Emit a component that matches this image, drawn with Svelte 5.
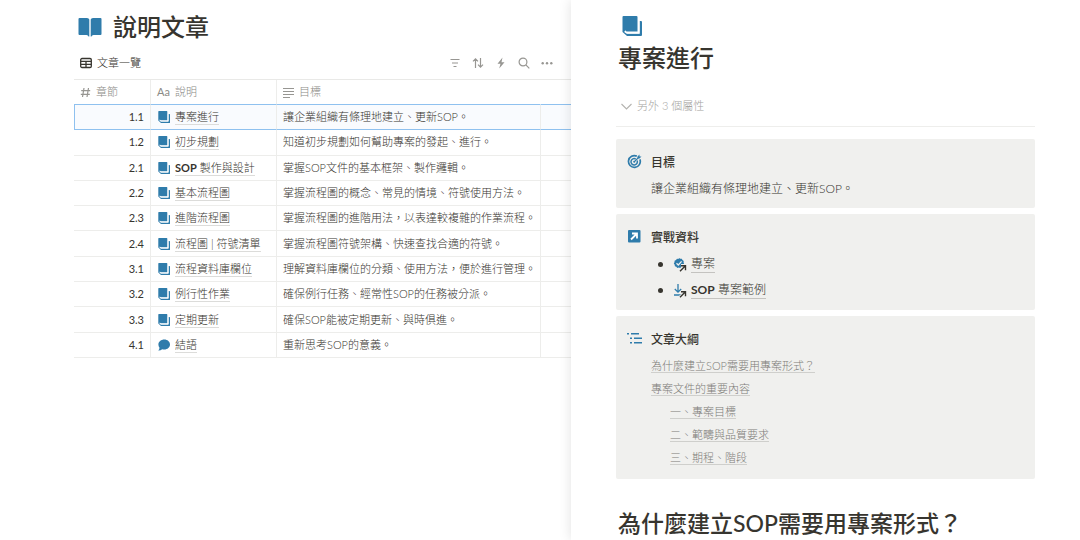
<script>
	const rows = [
		{ no: '1.1', title: '專案進行', goal: '讓企業組織有條理地建立、更新SOP。' },
		{ no: '1.2', title: '初步規劃', goal: '知道初步規劃如何幫助專案的發起、進行。' },
		{ no: '2.1', strong: 'SOP', title: ' 製作與設計', goal: '掌握SOP文件的基本框架、製作邏輯。' },
		{ no: '2.2', title: '基本流程圖', goal: '掌握流程圖的概念、常見的情境、符號使用方法。' },
		{ no: '2.3', title: '進階流程圖', goal: '掌握流程圖的進階用法，以表達較複雜的作業流程。' },
		{ no: '2.4', title: '流程圖 | 符號清單', goal: '掌握流程圖符號架構、快速查找合適的符號。' },
		{ no: '3.1', title: '流程資料庫欄位', goal: '理解資料庫欄位的分類、使用方法，便於進行管理。' },
		{ no: '3.2', title: '例行性作業', goal: '確保例行任務、經常性SOP的任務被分派。' },
		{ no: '3.3', title: '定期更新', goal: '確保SOP能被定期更新、與時俱進。' },
		{ no: '4.1', title: '結語', goal: '重新思考SOP的意義。', chat: true }
	];
	const outline = [
		{ text: '為什麼建立SOP需要用專案形式？' },
		{ text: '專案文件的重要內容' },
		{ text: '一、專案目標', sub: true },
		{ text: '二、範疇與品質要求', sub: true },
		{ text: '三、期程、階段', sub: true }
	];
	let selected = $state(0);
</script>

{#snippet book(size)}
	<svg width={size} height={size} viewBox="0 0 20 20" fill="#2f7cab" aria-hidden="true">
		<path d="M1.500 0H14.500a1 1 0 0 1 1 1v14.500H4.500L3 14.300V16l2 1.500H17.500V5H19a1 1 0 0 1 1 1v13a1 1 0 0 1-1 1H5L.5 16V1a1 1 0 0 1 1-1z" />
		<path d="M2.500 15.500l2.500 1.500h12V4.500" fill="none" stroke="#fff" stroke-width="1.300" />
	</svg>
{/snippet}

{#snippet arrow()}
	<path d="M7 14.500L12.500 9M8 8.800h5v5" fill="none" stroke="#f0f0ee" stroke-width="3.500" />
	<path d="M7 14.200L12.200 9M8 8.800h4.500v4.500" fill="none" stroke="#37352f" stroke-width="1.400" />
{/snippet}

<div class="page" lang="zh-Hant">
	<main class="list">
		<h1>
			<svg width="24" height="20" viewBox="0 0 24 20" fill="#2f7cab" aria-hidden="true">
				<path d="M1.500 1H9q2 0 2.300 1.600V19.500H10.500Q10.200 18 8.500 18H1.500Q.5 18 .5 17V2q0-1 1-1z" />
				<path d="M22.500 1H15q-2 0-2.300 1.600V19.500H13.500q.3-1.500 2-1.500h7q1 0 1-1V2q0-1-1-1z" />
			</svg>
			說明文章
		</h1>
		<div class="toolbar">
			<button class="tab">
				<svg width="12" height="12" viewBox="0 0 12 12" fill="none" stroke="#37352f" stroke-width="1.300">
					<rect x=".7" y="1.500" width="10.600" height="9" rx="1.300" />
					<path d="M.7 4.400h10.600M.7 7.400h10.600M6 4.400v6" />
				</svg>
				文章一覽
			</button>
			<div class="tools">
				<button aria-label="篩選">
					<svg width="12" height="12" viewBox="0 0 12 12"><path d="M1.500 2.500h9M3 6h6M4.500 9.500h3" /></svg>
				</button>
				<button aria-label="排序">
					<svg width="12" height="12" viewBox="0 0 12 12"><path d="M3.500 11V2M1 4.300L3.500 1.800 6 4.300M8.500 1v9M6 7.700l2.500 2.500L11 7.700" /></svg>
				</button>
				<button aria-label="自動化">
					<svg width="12" height="12" viewBox="0 0 12 12"><path class="fill" d="M7.500.5L2.500 6.800h3L4.200 11.500l5.300-6.300h-3z" /></svg>
				</button>
				<button aria-label="搜尋">
					<svg width="12" height="12" viewBox="0 0 12 12"><circle cx="5" cy="5" r="3.900" /><path d="M7.900 7.900l3.400 3.400" /></svg>
				</button>
				<button aria-label="更多">
					<svg width="12" height="12" viewBox="0 0 12 12">
						<g class="fill"><circle cx="1.700" cy="6.200" r="1.200" /><circle cx="6" cy="6.200" r="1.200" /><circle cx="10.300" cy="6.200" r="1.200" /></g>
					</svg>
				</button>
			</div>
		</div>

		<table>
			<colgroup>
				<col class="c-no" />
				<col class="c-title" />
				<col class="c-goal" />
				<col />
			</colgroup>
			<thead>
				<tr>
					<th>
						<span class="head">
							<svg width="11" height="11" viewBox="0 0 11 11"><path d="M4 1L2.500 10M8.500 1L7 10M1.200 3.700h9M.8 7.300h9" /></svg>
							章節
						</span>
					</th>
					<th><span class="head"><span class="aa">Aa</span>說明</span></th>
					<th>
						<span class="head">
							<svg width="11" height="11" viewBox="0 0 11 11"><path d="M0 1.500h11M0 4.500h11M0 7.500h11M0 10.500h7" /></svg>
							目標
						</span>
					</th>
					<th></th>
				</tr>
			</thead>
			<tbody>
				{#each rows as row, i}
					<tr class:selected={selected === i} onclick={() => (selected = i)}>
						<td class="no">{row.no}</td>
						<td>
							<span class="name">
								{#if row.chat}
									<svg width="12" height="12" viewBox="0 0 12 12" fill="#2f7cab" aria-hidden="true">
										<path d="M6.300.5C9.500.5 12 2.700 12 5.500s-2.500 5-5.700 5c-.8 0-1.500-.1-2.100-.3Q2.500 11.700.3 11.500q1.200-1 1.200-2.700Q.4 7.400.4 5.500c0-2.800 2.700-5 5.900-5z" />
									</svg>
								{:else}
									{@render book(12)}
								{/if}
								<a href="#{row.no}">{#if row.strong}<b>{row.strong}</b>{/if}{row.title}</a>
							</span>
						</td>
						<td>{row.goal}</td>
						<td></td>
					</tr>
				{/each}
			</tbody>
		</table>
	</main>

	<aside class="peek">
		<div class="cover">{@render book(20)}</div>
		<h1>專案進行</h1>
		<button class="more">
			<svg width="11" height="11" viewBox="0 0 11 11" fill="none" stroke="#b4b3af" stroke-width="1.100"><path d="M.5 3l5 5 5-5" /></svg>
			另外 3 個屬性
		</button>
		<hr />

		<div class="callouts">
			<section>
				<svg width="15" height="15" viewBox="0 0 15 15" fill="none" stroke="#2f7cab" aria-hidden="true">
					<path d="M9.800 2.100A5.900 5.900 0 1 0 12.900 5.400" stroke-width="1.700" />
					<path d="M8.700 5A3.200 3.200 0 1 0 10.100 6.500" stroke-width="1.500" />
					<circle cx="7.200" cy="7.800" r="1" fill="#2f7cab" stroke="none" />
					<path d="M7.200 7.800L12 3" stroke-width="1.200" />
					<path d="M10.500 4.500V2.500L12.500.5V2.500h2L12.500 4.500z" fill="#2f7cab" stroke="none" />
				</svg>
				<div>
					<h2>目標</h2>
					<p>讓企業組織有條理地建立、更新SOP。</p>
				</div>
			</section>
			<section>
				<svg width="15" height="15" viewBox="0 0 15 15" aria-hidden="true">
					<rect x="1" y="1" width="12.500" height="12.500" rx="1" fill="#2f7cab" />
					<path d="M4 10.500l5.500-5.500M5 4.500h5v5" fill="none" stroke="#fff" stroke-width="1.800" />
				</svg>
				<div>
					<h2>實戰資料</h2>
					<ul>
						<li>
							<svg width="14" height="15" viewBox="0 0 14 15" aria-hidden="true">
								<path d="M6 1l1.300.7 1.500.1.700 1.300 1.200.9-.1 1.500.5 1.400-1 1.100-.4 1.500-1.400.4L7.200 11l-1.400-.4-1.500.3-1-1.100-1.400-.6-.2-1.500L.8 6.500l.7-1.300.1-1.500L3 3l1-1.200 1.500.1z" fill="#2f7cab" />
								<path d="M3.500 6.200l1.800 1.800 3.300-3.600" fill="none" stroke="#f0f0ee" stroke-width="1.300" />
								{@render arrow()}
							</svg>
							<a href="#project">專案</a>
						</li>
						<li>
							<svg width="14" height="15" viewBox="0 0 14 15" aria-hidden="true">
								<path d="M5 1v8M1.800 6L5 9.200 8.200 6M1 12h7" fill="none" stroke="#2f7cab" stroke-width="1.300" />
								{@render arrow()}
							</svg>
							<a href="#example"><b>SOP</b> 專案範例</a>
						</li>
					</ul>
				</div>
			</section>
			<section>
				<svg width="15" height="15" viewBox="0 0 15 15" fill="#2f7cab" aria-hidden="true">
					<path d="M0 2h2v1.500H0zM4 2h8v1.500H4zM3 6.500h2V8H3zM7 6.500h8V8H7zM3 11h2v1.500H3zM7 11h8v1.500H7z" />
				</svg>
				<div>
					<h2>文章大綱</h2>
					<nav>
						{#each outline as item, i}
							<div class:sub={item.sub}><a href="#section-{i}">{item.text}</a></div>
						{/each}
					</nav>
				</div>
			</section>
		</div>
		<h1 class="section-title" id="section-0">為什麼建立SOP需要用專案形式？</h1>
	</aside>
</div>

<style>
	:global(body) {
		background: #fff;
	}
	.page {
		display: grid;
		grid-template-columns: 571fr 509fr;
		height: 100vh;
		overflow: hidden;
		font: 300 11px/16px Lato, 'Noto Sans CJK TC', sans-serif;
		color: #37352f;
	}
	h1,
	h2,
	p,
	ul {
		margin: 0;
		padding: 0;
	}
	h1 {
		font-size: 24px;
		line-height: 32px;
		font-weight: 500;
	}
	b {
		font-weight: 700;
	}
	button {
		display: flex;
		align-items: center;
		padding: 0;
		border: 0;
		background: none;
		font: inherit;
		color: inherit;
		cursor: pointer;
	}
	a {
		color: inherit;
		text-decoration: none;
		border-bottom: 1px solid #dcdcda;
	}
	svg {
		flex: none;
	}

	.list {
		min-width: 0;
		overflow: hidden;
		padding: 11px 0 0 74px;
	}
	.list h1 {
		display: flex;
		align-items: center;
		gap: 11px;
		padding-left: 4px;
	}
	.toolbar {
		display: flex;
		justify-content: space-between;
		align-items: center;
		height: 32px;
		margin-top: 4px;
		padding: 0 18px 0 6px;
		border-bottom: 1px solid #e9e9e7;
	}
	.tab {
		gap: 5px;
	}
	.tools {
		display: flex;
		gap: 11px;
	}
	.tools svg,
	.head svg {
		fill: none;
		stroke: #979692;
		stroke-width: 1.2;
	}
	.tools .fill {
		fill: #979692;
		stroke: none;
	}

	table {
		width: 100%;
		height: 278px;
		table-layout: fixed;
		border-collapse: separate;
		border-spacing: 0;
	}
	.c-no {
		width: 77px;
	}
	.c-title {
		width: 126px;
	}
	.c-goal {
		width: 264px;
	}
	th,
	td {
		padding: 0 6px;
		border-right: 1px solid #ededeb;
		border-bottom: 1px solid #ededeb;
		text-align: left;
		font-weight: inherit;
		white-space: nowrap;
		line-height: 16px;
	}
	th:last-child,
	td:last-child {
		border-right: 0;
	}
	th:nth-child(3) {
		border-right-color: transparent;
	}
	th {
		height: 24px;
		color: #8b8a86;
		border-bottom-color: #8fc1ef;
	}
	.no {
		text-align: right;
		font-weight: 400;
	}
	.head,
	.name {
		display: flex;
		align-items: center;
		gap: 5px;
	}
	.name {
		padding-left: 1px;
	}
	.aa {
		font-weight: 400;
	}
	.name a {
		line-height: 15px;
	}
	.selected td {
		background: #f9fbfe;
		border-bottom-color: #8fc1ef;
	}
	.selected td:first-child {
		border-left: 1px solid #8fc1ef;
	}

	.peek {
		min-width: 0;
		padding: 16px 45px 0;
		background: #fff;
		box-shadow: 0 0 12px rgba(15, 15, 15, 0.12);
	}
	.cover {
		display: flex;
		padding-left: 6px;
		height: 26px;
	}
	.cover + h1,
	.section-title {
		padding-left: 2px;
	}
	.more {
		gap: 5px;
		margin-top: 24px;
		padding-left: 5px;
		color: #a5a4a0;
	}
	hr {
		margin: 12px 0;
		border: 0;
		border-top: 1px solid #eeeeec;
	}
	.callouts {
		display: grid;
		gap: 6px;
	}
	section {
		display: flex;
		gap: 9px;
		padding: 11px 11px 6px;
		border-radius: 2px;
		background: #f0f0ee;
		font-size: 12px;
		line-height: 26px;
	}
	section > svg {
		margin-top: 4px;
	}
	h2 {
		font-size: 12px;
		line-height: 26px;
		font-weight: 500;
	}
	ul {
		list-style: none;
		padding-bottom: 1px;
	}
	li {
		display: flex;
		align-items: center;
		gap: 4px;
		height: 26px;
		padding-left: 7px;
	}
	li::before {
		content: '';
		width: 5px;
		height: 5px;
		margin-right: 6px;
		border-radius: 50%;
		background: #37352f;
	}
	li a {
		line-height: 16px;
		border-color: #c4c3c0;
	}
	nav {
		padding: 1px 0 4px;
		font-size: 11px;
		line-height: 23px;
		color: #7d7c78;
	}
	nav a {
		border-color: #cfcfcc;
	}
	.sub {
		padding-left: 19px;
	}
	.section-title {
		margin-top: 28px;
		font-size: 23px;
	}
</style>
